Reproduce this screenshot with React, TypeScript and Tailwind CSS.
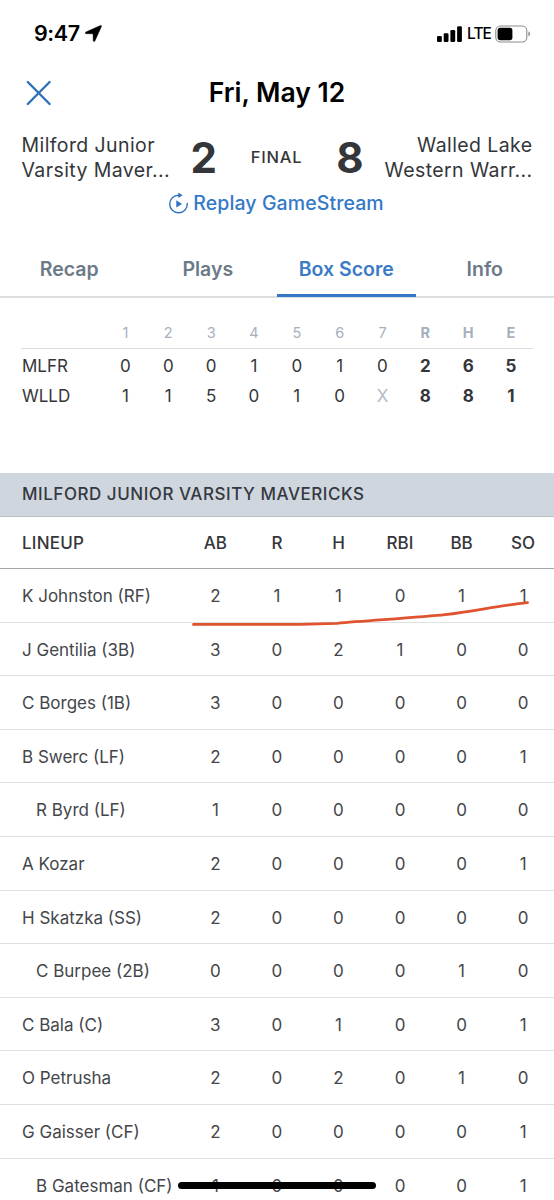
const innings = ['1', '2', '3', '4', '5', '6', '7', 'R', 'H', 'E'];

const lines = [
  { team: 'MLFR', cells: ['0', '0', '0', '1', '0', '1', '0', '2', '6', '5'] },
  { team: 'WLLD', cells: ['1', '1', '5', '0', '1', '0', 'X', '8', '8', '1'] },
];

const stats = ['AB', 'R', 'H', 'RBI', 'BB', 'SO'];

const lineup: { name: string; sub?: boolean; values: number[] }[] = [
  { name: 'K Johnston (RF)', values: [2, 1, 1, 0, 1, 1] },
  { name: 'J Gentilia (3B)', values: [3, 0, 2, 1, 0, 0] },
  { name: 'C Borges (1B)', values: [3, 0, 0, 0, 0, 0] },
  { name: 'B Swerc (LF)', values: [2, 0, 0, 0, 0, 1] },
  { name: 'R Byrd (LF)', sub: true, values: [1, 0, 0, 0, 0, 0] },
  { name: 'A Kozar', values: [2, 0, 0, 0, 0, 1] },
  { name: 'H Skatzka (SS)', values: [2, 0, 0, 0, 0, 0] },
  { name: 'C Burpee (2B)', sub: true, values: [0, 0, 0, 0, 1, 0] },
  { name: 'C Bala (C)', values: [3, 0, 1, 0, 0, 1] },
  { name: 'O Petrusha', values: [2, 0, 2, 0, 1, 0] },
  { name: 'G Gaisser (CF)', values: [2, 0, 0, 0, 0, 1] },
  { name: 'B Gatesman (CF)', sub: true, values: [1, 0, 0, 0, 0, 1] },
];

const tabs = ['Recap', 'Plays', 'Box Score', 'Info'];

function StatusBar() {
  return (
    <div className="flex h-[67px] items-center justify-between pl-[34px] pr-[23px] text-black">
      <div className="flex items-center gap-[5px]">
        <span className="text-[21.5px] font-semibold leading-none tracking-[-0.4px]">9:47</span>
        <svg className="h-[17px] w-[17px]" viewBox="0 0 17 17">
          <path d="M15.4 0.6 L1 6.9 C-0.1 7.5 0.1 8.7 1.2 8.7 L7.4 8.8 C7.9 8.8 8.1 9 8.1 9.4 L8.2 15.4 C8.3 16.7 9.5 16.8 10 15.7 L16.4 1.5 C16.8 0.7 16.2 0.2 15.4 0.6 Z" fill="currentColor" stroke="currentColor" strokeWidth="0.5" />
        </svg>
      </div>
      <div className="flex items-center">
        <svg className="h-[16px] w-[25px]" viewBox="0 0 25 16">
          <rect x="0" y="10" width="4.8" height="6" rx="1.2" />
          <rect x="6.7" y="7.3" width="4.8" height="8.7" rx="1.2" />
          <rect x="13.4" y="4" width="4.8" height="12" rx="1.2" />
          <rect x="20.1" y="0.3" width="4.8" height="15.7" rx="1.2" />
        </svg>
        <span className="ml-[5px] w-[23px] text-[15.5px] font-medium leading-none tracking-[-0.9px]">LTE</span>
        <svg className="ml-[5px] h-[18px] w-[36px]" viewBox="0 0 36 18">
          <rect x="0.8" y="1" width="31" height="16" rx="4.6" fill="none" stroke="#8c8c8c" strokeWidth="1.1" />
          <rect x="2.6" y="2.8" width="14.8" height="12.4" rx="2.6" fill="#000" />
          <path d="M33.4 6.6 C35.6 7.2 35.6 10.8 33.4 11.4 Z" fill="#8c8c8c" />
        </svg>
      </div>
    </div>
  );
}

function ReplayIcon() {
  return (
    <svg className="mb-[2px] h-[22px] w-[20px]" viewBox="0 0 20 22" fill="none">
      <path d="M9.8 3.2 A8.8 8.8 0 1 0 18.3 11.5" stroke="#2f72bf" strokeWidth="1.4" strokeLinecap="round" />
      <path d="M9.3 0.5 L13.6 3.2 L9.3 5.9 Z" fill="#2f72bf" />
      <path d="M7.3 8.3 L13 11.9 L7.3 15.5 Z" fill="#2f72bf" />
    </svg>
  );
}

export default function App() {
  return (
    <div className="relative h-[1200px] w-[554px] overflow-hidden whitespace-nowrap bg-white font-['Inter',sans-serif] text-[#343639]">
      <StatusBar />

      <header className="grid h-[52px] grid-cols-[1fr_auto_1fr] items-center px-[26px]">
        <svg className="h-[26px] w-[26px]" viewBox="0 0 26 26">
          <path d="M1.8 2 L23.6 24 M23.6 2 L1.8 24" stroke="#2f6fb8" strokeWidth="2.4" strokeLinecap="round" />
        </svg>
        <h1 className="pb-[2px] text-[26.5px] font-semibold leading-none text-black">Fri, May 12</h1>
        <span />
      </header>

      <section className="flex h-[77px] items-center justify-between pl-[21.5px] pr-[21.5px] text-[19.5px] leading-[25px]">
        <div className="w-[150px] tracking-[0.4px]">
          <div>Milford Junior</div>
          <div>Varsity Maver...</div>
        </div>
        <div className="flex w-[210px] items-center justify-between px-[18.5px]">
          <span className="text-[42px] font-bold leading-none">2</span>
          <span className="text-[16.5px] font-medium tracking-[0.8px]">FINAL</span>
          <span className="text-[42px] font-bold leading-none">8</span>
        </div>
        <div className="w-[150px] text-right tracking-[0.4px]">
          <div>Walled Lake</div>
          <div>Western Warr...</div>
        </div>
      </section>

      <div className="flex h-[15px] items-center justify-center gap-[4px] pr-px text-[#3478c8]">
        <ReplayIcon />
        <span className="pt-px text-[19.5px] font-medium leading-none tracking-[0.1px]">Replay GameStream</span>
      </div>

      <nav className="mt-[28px] grid h-[59px] grid-cols-4 border-b-2 border-[#dcdde0]">
        {tabs.map((t) => (
          <div
            key={t}
            className={
              t === 'Box Score'
                ? '-mb-[1px] border-b-[3px] border-[#3377c6] pt-[17.5px] text-center text-[19.5px] font-semibold leading-[24px] text-[#3b7bc6]'
                : 'pt-[17.5px] text-center text-[19.5px] font-semibold leading-[24px] text-[#6c7a88]'
            }
          >
            {t}
          </div>
        ))}
      </nav>

      <section className="mx-[21px] mt-[20px]">
        <div className="grid h-[31px] grid-cols-[83px_repeat(10,42.85px)] items-center border-b border-[#dcdde0] text-center text-[14.5px] text-[#a6b0bd]">
          <span />
          {innings.map((n, i) => (
            <span key={n} className={i > 6 ? 'font-bold' : ''}>{n}</span>
          ))}
        </div>
        <div className="pt-[3px]">
          {lines.map((l) => (
            <div key={l.team} className="grid h-[29.5px] grid-cols-[83px_repeat(10,42.85px)] items-center text-center text-[17px]">
              <span className="pl-px text-left">{l.team}</span>
              {l.cells.map((c, i) => (
                <span key={i} className={i > 6 ? 'font-bold' : c === 'X' ? 'text-[#b3bbc6]' : ''}>{c}</span>
              ))}
            </div>
          ))}
        </div>
      </section>

      <section className="mt-[62px]">
        <h2 className="flex h-[43.5px] items-center border-b border-[#b9bfc6] bg-[#d0d6de] pl-[22px] text-[17px] font-medium tracking-[0.53px] text-[#343941]">
          MILFORD JUNIOR VARSITY MAVERICKS
        </h2>
        <div className="grid h-[52.5px] grid-cols-[184.6px_repeat(6,61.56px)] items-center border-b border-[#a4a8ad] pt-[2.5px] text-center text-[17px] font-medium">
          <span className="pl-[22px] text-left tracking-[0.2px]">LINEUP</span>
          {stats.map((s) => (
            <span key={s}>{s}</span>
          ))}
        </div>
        {lineup.map((p) => (
          <div key={p.name} className="grid h-[53.6px] grid-cols-[184.6px_repeat(6,61.56px)] items-center border-b border-[#dfe0e3] pt-[3px] text-center text-[17px] text-[#44464a]">
            <span className={p.sub ? 'pl-[36px] text-left' : 'pl-[22px] text-left'}>{p.name}</span>
            {p.values.map((v, i) => (
              <span key={i}>{v}</span>
            ))}
          </div>
        ))}
      </section>

      <svg className="pointer-events-none absolute left-[190px] top-[598px] h-[30px] w-[342px]" viewBox="190 598 342 30" fill="none">
        <path d="M193.5 624.4 L300 624.4 L337 623.3 C370 620.5 425 617 445 614.7 C475 611 500 605.5 527.5 602.6" stroke="#e0532f" strokeWidth="2.8" strokeLinecap="round" strokeLinejoin="round" />
      </svg>
      <div className="absolute left-[178px] top-[1182px] h-[7px] w-[198px] rounded-full bg-black" />
    </div>
  );
}
